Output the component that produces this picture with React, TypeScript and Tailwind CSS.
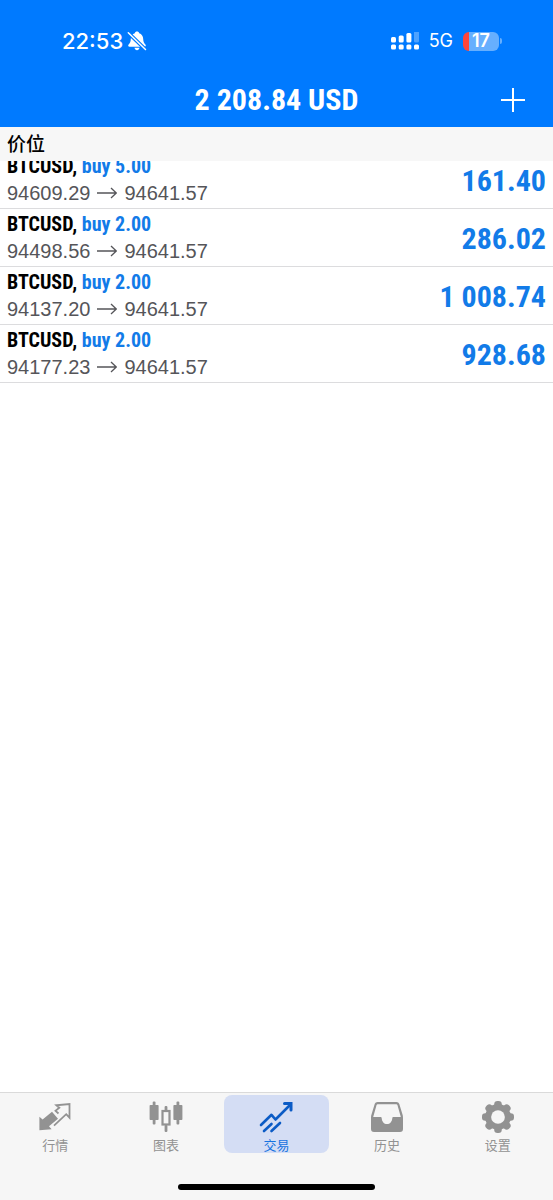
import type { ReactNode } from 'react';

const condensed = "font-['Roboto_Condensed','Liberation_Sans','Noto_Sans_CJK_SC',sans-serif] font-bold";

const positions = [
  { symbol: 'BTCUSD', side: 'buy 5.00', open: '94609.29', current: '94641.57', profit: '161.40' },
  { symbol: 'BTCUSD', side: 'buy 2.00', open: '94498.56', current: '94641.57', profit: '286.02' },
  { symbol: 'BTCUSD', side: 'buy 2.00', open: '94137.20', current: '94641.57', profit: '1 008.74' },
  { symbol: 'BTCUSD', side: 'buy 2.00', open: '94177.23', current: '94641.57', profit: '928.68' },
];

function BellOffIcon() {
  return (
    <svg width="20" height="20" viewBox="0 0 20 20" fill="currentColor" aria-hidden="true">
      <path d="M10 0.500C8.800 0.500 8 1.200 7.800 2.200C5.200 3 3.900 5.200 3.800 8C3.700 11 2.900 12 1.600 13.500C0.800 14.600 1.200 15.800 2.600 15.800H17.400C18.800 15.800 19.200 14.600 18.400 13.500C17.100 12 16.300 11 16.200 8C16.100 5.200 14.800 3 12.200 2.200C12 1.200 11.200 0.500 10 0.500Z" />
      <path d="M7.500 16.800H12.500C12.200 18.400 11.300 19.300 10 19.300C8.700 19.300 7.800 18.400 7.500 16.800Z" />
      <path d="M1.300 1.800L18.500 18.500" stroke="#007aff" strokeWidth="3.800" />
      <path d="M1.300 1.800L18.500 18.500" stroke="currentColor" strokeWidth="1.500" strokeLinecap="round" />
    </svg>
  );
}

function SignalIcon() {
  return (
    <svg width="28" height="18" viewBox="0 0 28 18" fill="currentColor" aria-hidden="true">
      <rect x="0" y="5" width="5" height="5.500" rx="1.500" />
      <rect x="7.700" y="3.500" width="5" height="7" rx="1.500" />
      <rect x="15.400" y="1" width="5" height="9.500" rx="1.500" />
      <rect x="23" y="-1" width="5" height="11.500" rx="1.500" opacity="0.300" />
      <rect x="0" y="12.500" width="5" height="5" rx="1.500" />
      <rect x="7.700" y="12.500" width="5" height="5" rx="1.500" />
      <rect x="15.400" y="12.500" width="5" height="5" rx="1.500" />
      <rect x="23" y="12.500" width="5" height="5" rx="1.500" />
    </svg>
  );
}

function Battery() {
  return (
    <div className="flex items-center gap-px">
      <div className="flex h-[19px] w-9 items-center justify-center overflow-hidden rounded-md bg-linear-to-r from-[#ff453a] from-16% to-[#66affe] to-16% text-lg font-semibold">
        17
      </div>
      <div className="h-1.5 w-0.5 rounded-r bg-[#66affe]" />
    </div>
  );
}

function QuotesIcon() {
  return (
    <svg width="34" height="32" viewBox="0 0 34 32" className="shrink-0" aria-hidden="true">
      <path d="M1.400 29.300V15.700L4.600 18.400L14 10.800L20 17.800L11 25.300L13.600 28.300Z" fill="currentColor" />
      <path d="M20.500 12.500L17.500 9.800L21.300 6.800L18.300 4.300L31.500 3V16.700L28.200 13.200L16 24.600" fill="none" stroke="currentColor" strokeWidth="1.800" />
    </svg>
  );
}

function ChartIcon() {
  return (
    <svg width="34" height="32" viewBox="0 0 34 32" fill="currentColor" className="shrink-0" aria-hidden="true">
      <rect x="0.600" y="4" width="9" height="15" rx="0.800" />
      <rect x="3.700" y="0.500" width="2.800" height="23" rx="1" />
      <rect x="24.400" y="4" width="9" height="15" rx="0.800" />
      <rect x="27.500" y="0.500" width="2.800" height="23" rx="1" />
      <rect x="13.500" y="10" width="7" height="13.500" fill="none" stroke="currentColor" strokeWidth="2.200" />
      <rect x="15.600" y="5" width="2.800" height="5.500" rx="1" />
      <rect x="15.600" y="24" width="2.800" height="7" rx="1" />
    </svg>
  );
}

function TradeIcon() {
  return (
    <svg width="34" height="32" viewBox="0 0 34 32" fill="none" stroke="currentColor" strokeWidth="2.600" strokeLinecap="round" strokeLinejoin="round" className="shrink-0" aria-hidden="true">
      <path d="M2 24L12.500 13.800L16.500 18.500L30.500 4.500" />
      <path d="M5 30L12.500 23M12.500 30L21 22" />
      <path d="M25.500 2.500H32V9" strokeWidth="3" strokeLinejoin="miter" />
    </svg>
  );
}

function HistoryIcon() {
  return (
    <svg width="34" height="32" viewBox="0 0 34 32" className="shrink-0" aria-hidden="true">
      <path
        d="M7.500 1H26.500C27.800 1 28.800 1.700 29.300 3L32.500 13.500C32.900 14.700 33 15.500 33 17V28C33 30 32 31 30 31H4C2 31 1 30 1 28V17C1 15.500 1.100 14.700 1.500 13.500L4.700 3C5.200 1.700 6.200 1 7.500 1ZM8 3.200C7.200 3.200 6.800 3.500 6.500 4.300L3.200 16H10.500C11.300 16 11.600 16.400 11.700 17.200C12 20.700 14 23 17 23C20 23 22 20.700 22.300 17.200C22.400 16.400 22.700 16 23.500 16H30.800L27.500 4.300C27.200 3.500 26.800 3.200 26 3.200Z"
        fill="currentColor"
        fillRule="evenodd"
      />
    </svg>
  );
}

function SettingsIcon() {
  return (
    <svg width="34" height="32" viewBox="0 0 34 34" fill="currentColor" className="shrink-0" aria-hidden="true">
      {[0, 45, 90, 135].map((angle) => (
        <rect key={angle} x="13" y="0" width="8" height="34" rx="3.500" transform={`rotate(${angle} 17 17)`} />
      ))}
      <circle cx="17" cy="17" r="13.700" />
      <circle cx="17" cy="17" r="7.300" fill="#f6f6f6" />
    </svg>
  );
}

function Tab({ label, icon, active }: { label: string; icon: ReactNode; active?: boolean }) {
  return (
    <a
      href="#"
      aria-current={active ? 'page' : undefined}
      className={`mx-[3px] flex min-w-0 flex-1 flex-col items-center rounded-lg pt-1.5 ${
        active ? 'bg-[#d4ddf4] text-[#0b5bc5]' : 'text-[#929292]'
      }`}
    >
      {icon}
      <span className={`mt-1.5 text-[13px] leading-[14px] ${active ? 'text-[#1673e0]' : ''}`}>{label}</span>
    </a>
  );
}

export default function App() {
  return (
    <div className="flex min-h-screen flex-col bg-white font-['Liberation_Sans','Noto_Sans_CJK_SC',sans-serif]">
      <header className="z-10 bg-[#007aff] text-white">
        <div className="flex h-[72px] items-center justify-between pt-2.5 pr-[51px] pl-[62px] font-['Inter','Liberation_Sans',sans-serif]">
          <div className="flex items-center gap-1 text-[22px] font-medium">
            22:53
            <BellOffIcon />
          </div>
          <div className="flex items-center gap-2.5">
            <SignalIcon />
            <span className="text-lg">5G</span>
            <Battery />
          </div>
        </div>
        <div className="grid h-[55px] grid-cols-[1fr_auto_1fr] items-center px-7">
          <h1 className={`col-start-2 text-3xl leading-9 ${condensed}`}>2 208.84 USD</h1>
          <button type="button" aria-label="+" className="justify-self-end">
            <svg width="24" height="24" viewBox="0 0 24 24" stroke="currentColor" strokeWidth="2" aria-hidden="true">
              <path d="M12 0V24M0 12H24" />
            </svg>
          </button>
        </div>
      </header>

      <main className="flex flex-1 flex-col">
        <h2 className="z-10 bg-[#f7f7f7] px-[7px] pt-[5px] pb-[3px] text-[19px] leading-[26px] font-medium text-black">价位</h2>
        {/* the list is scrolled a little under the section header */}
        <ul className="-mt-2.5">
          {positions.map((p) => (
            <li key={p.open} className="flex items-center justify-between border-b border-[#dcdcde] px-[7px] pt-1 pb-px">
              <div>
                <div className={`text-xl leading-[22px] text-black ${condensed}`}>
                  {p.symbol}, <span className="text-[#127be8]">{p.side}</span>
                </div>
                <div className="mt-0.5 flex items-center gap-[7px] text-xl leading-7 text-[#555559]">
                  {p.open}
                  <svg width="20" height="12" viewBox="0 0 20 12" fill="none" stroke="currentColor" strokeWidth="1.300" aria-hidden="true">
                    <path d="M0 6H19M14 1L19.300 6L14 11" />
                  </svg>
                  {p.current}
                </div>
              </div>
              <div className={`text-3xl leading-9 text-[#127be8] ${condensed}`}>{p.profit}</div>
            </li>
          ))}
        </ul>
      </main>

      <footer className="border-t border-[#dadada] bg-[#f6f6f6]">
        <nav className="flex pt-0.5">
          <Tab label="行情" icon={<QuotesIcon />} />
          <Tab label="图表" icon={<ChartIcon />} />
          <Tab label="交易" icon={<TradeIcon />} active />
          <Tab label="历史" icon={<HistoryIcon />} />
          <Tab label="设置" icon={<SettingsIcon />} />
        </nav>
        <div className="mx-auto mt-[31px] mb-2.5 h-1.5 w-[197px] rounded-full bg-black" />
      </footer>
    </div>
  );
}
